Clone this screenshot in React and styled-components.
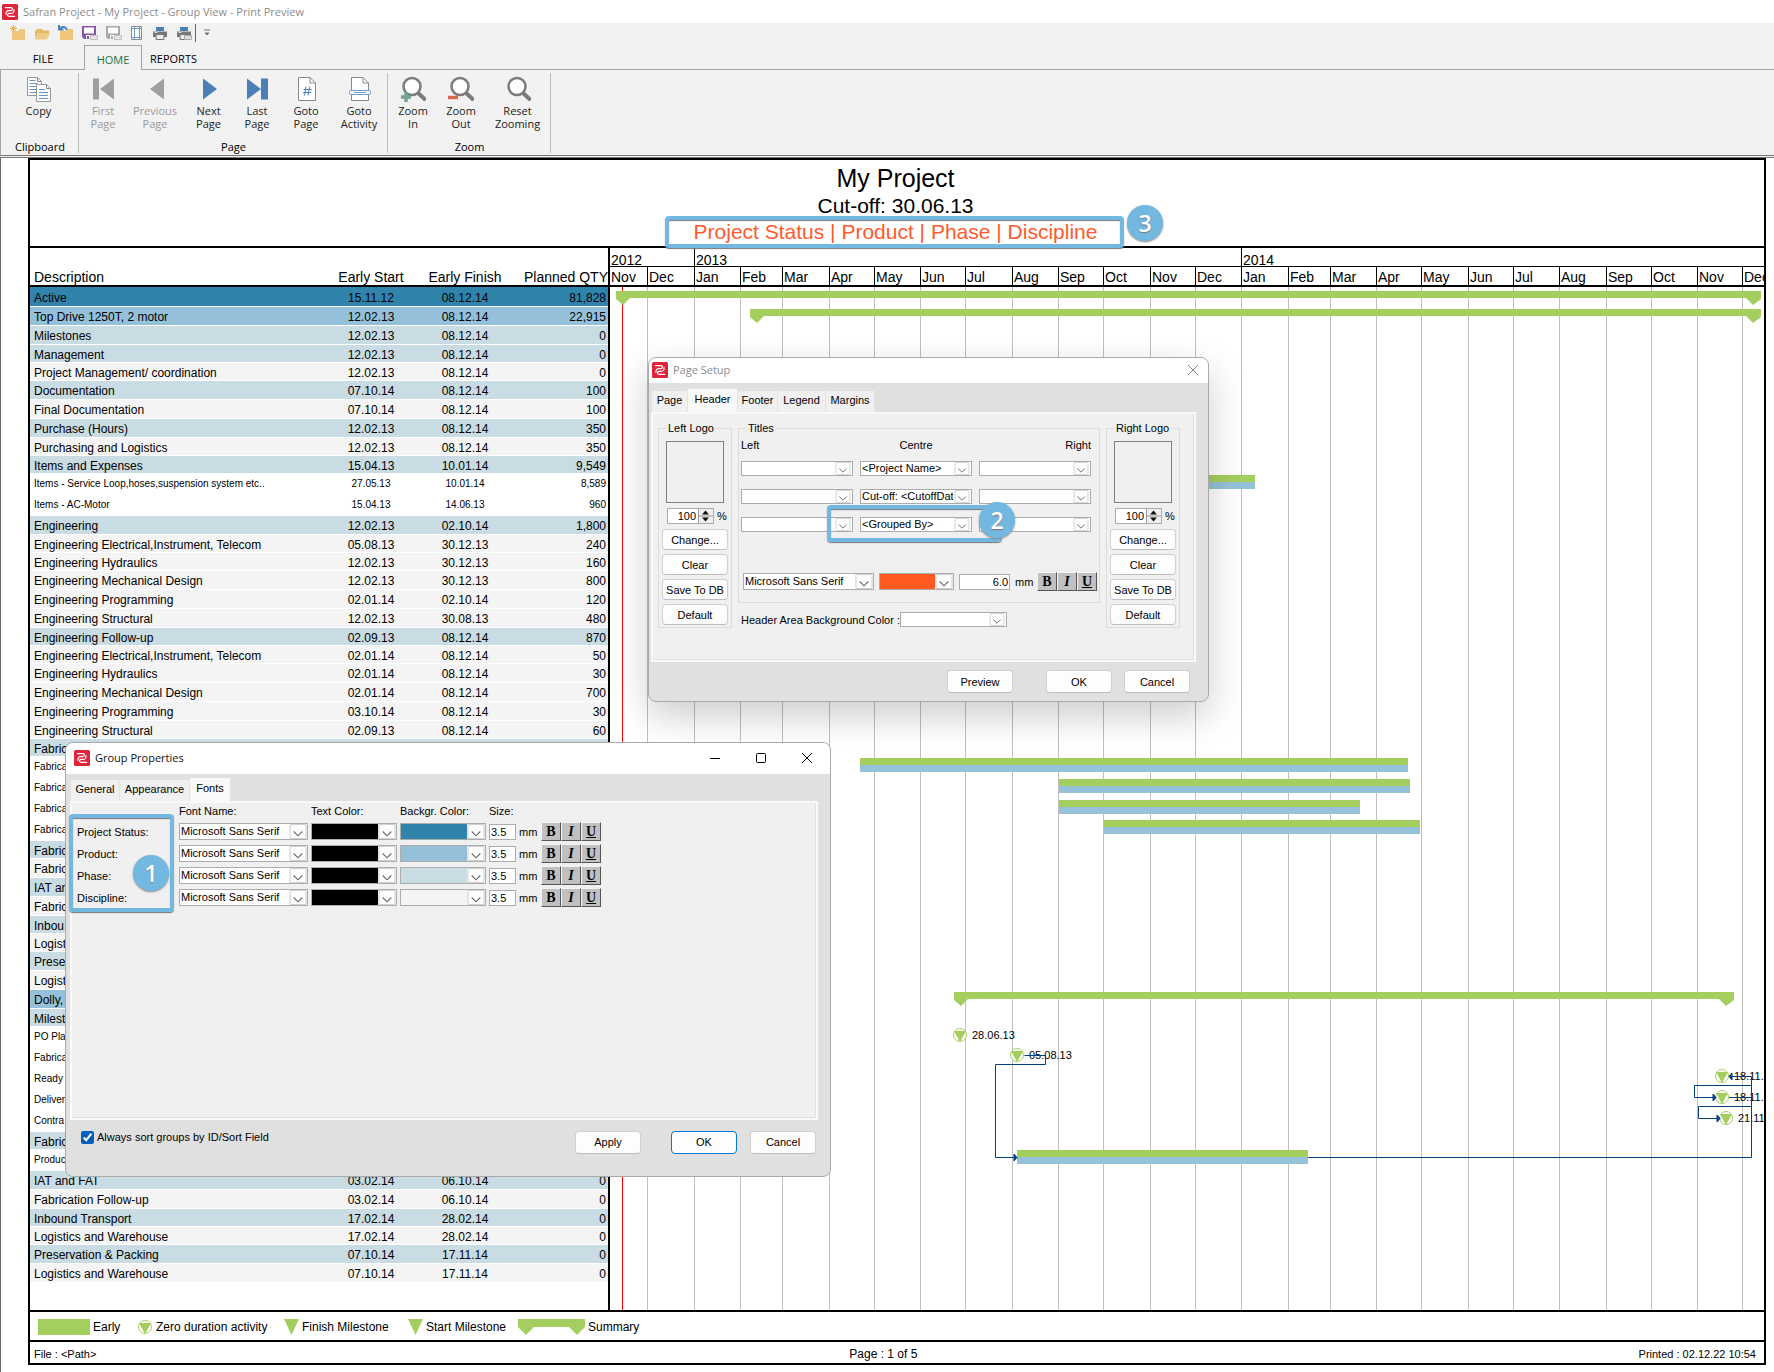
import { useState } from 'react';
import { styled, createGlobalStyle, css } from 'styled-components';

const GREEN = '#a4cf5e';
const BLUE = '#96c2d9';
const LINK = '#04417f';
const UI = "'Open Sans', 'Noto Sans', sans-serif";
const SANS = "'Liberation Sans', Arial, sans-serif";

const levels = {
  status: '#3083ab',
  product: '#94c1d9',
  phase: '#c9dbe3',
  discipline: '#f4f4f4',
  task: '#ffffff',
};

const rows = [
  ['status', 'Active', '15.11.12', '08.12.14', '81,828'],
  ['product', 'Top Drive 1250T, 2 motor', '12.02.13', '08.12.14', '22,915'],
  ['phase', 'Milestones', '12.02.13', '08.12.14', '0'],
  ['phase', 'Management', '12.02.13', '08.12.14', '0'],
  ['discipline', 'Project Management/ coordination', '12.02.13', '08.12.14', '0'],
  ['phase', 'Documentation', '07.10.14', '08.12.14', '100'],
  ['discipline', 'Final Documentation', '07.10.14', '08.12.14', '100'],
  ['phase', 'Purchase (Hours)', '12.02.13', '08.12.14', '350'],
  ['discipline', 'Purchasing and Logistics', '12.02.13', '08.12.14', '350'],
  ['phase', 'Items and Expenses', '15.04.13', '10.01.14', '9,549'],
  ['task', 'Items - Service Loop,hoses,suspension system etc..', '27.05.13', '10.01.14', '8,589'],
  ['task', 'Items - AC-Motor', '15.04.13', '14.06.13', '960'],
  ['phase', 'Engineering', '12.02.13', '02.10.14', '1,800'],
  ['discipline', 'Engineering Electrical,Instrument, Telecom', '05.08.13', '30.12.13', '240'],
  ['discipline', 'Engineering Hydraulics', '12.02.13', '30.12.13', '160'],
  ['discipline', 'Engineering Mechanical Design', '12.02.13', '30.12.13', '800'],
  ['discipline', 'Engineering Programming', '02.01.14', '02.10.14', '120'],
  ['discipline', 'Engineering Structural', '12.02.13', '30.08.13', '480'],
  ['phase', 'Engineering Follow-up', '02.09.13', '08.12.14', '870'],
  ['discipline', 'Engineering Electrical,Instrument, Telecom', '02.01.14', '08.12.14', '50'],
  ['discipline', 'Engineering Hydraulics', '02.01.14', '08.12.14', '30'],
  ['discipline', 'Engineering Mechanical Design', '02.01.14', '08.12.14', '700'],
  ['discipline', 'Engineering Programming', '03.10.14', '08.12.14', '30'],
  ['discipline', 'Engineering Structural', '02.09.13', '08.12.14', '60'],
  ['phase', 'Fabric'],
  ['task', 'Fabrica'],
  ['task', 'Fabrica'],
  ['task', 'Fabrica'],
  ['task', 'Fabrica'],
  ['phase', 'Fabric'],
  ['discipline', 'Fabric'],
  ['phase', 'IAT an'],
  ['discipline', 'Fabric'],
  ['phase', 'Inbou'],
  ['discipline', 'Logist'],
  ['phase', 'Prese'],
  ['discipline', 'Logist'],
  ['product', 'Dolly,'],
  ['phase', 'Milest'],
  ['task', 'PO Pla'],
  ['task', 'Fabrica'],
  ['task', 'Ready'],
  ['task', 'Deliver'],
  ['task', 'Contra'],
  ['phase', 'Fabric'],
  ['task', 'Produc'],
  ['phase', 'IAT and FAT', '03.02.14', '06.10.14', '0'],
  ['discipline', 'Fabrication Follow-up', '03.02.14', '06.10.14', '0'],
  ['phase', 'Inbound Transport', '17.02.14', '28.02.14', '0'],
  ['discipline', 'Logistics and Warehouse', '17.02.14', '28.02.14', '0'],
  ['phase', 'Preservation & Packing', '07.10.14', '17.11.14', '0'],
  ['discipline', 'Logistics and Warehouse', '07.10.14', '17.11.14', '0'],
];

// left edge of every month on the time scale
const monthNames = ['Jan', 'Feb', 'Mar', 'Apr', 'May', 'Jun', 'Jul', 'Aug', 'Sep', 'Oct', 'Nov', 'Dec'];
const dayWidth = 1.5;
const firstMonthWidth = 37;
const dec2012 = Date.UTC(2012, 11, 1);

const months = Array.from({ length: 26 }, (_, i) => {
  const date = Date.UTC(2012, 10 + i, 1);
  const left = i === 0 ? 0 : Math.round(firstMonthWidth + ((date - dec2012) / 86400000) * dayWidth);
  return { name: monthNames[(10 + i) % 12], left };
});

const widthOf = (from, to) => (months[to] ? months[to].left - months[from].left : undefined);

const years = [
  { name: '2012', width: widthOf(0, 2) },
  { name: '2013', width: widthOf(2, 14) },
  { name: '2014' },
];

const summaries = [
  { x1: 6, x2: 1151, y: 4 },
  { x1: 140, x2: 1151, y: 22 },
  { x1: 344, x2: 1124, y: 705 },
];

const bars = [
  { x1: 263, x2: 645, y: 188 },
  { x1: 250, x2: 798, y: 471 },
  { x1: 449, x2: 800, y: 492 },
  { x1: 449, x2: 750, y: 513 },
  { x1: 494, x2: 810, y: 533 },
  { x1: 407, x2: 698, y: 863 },
];

const milestones = [
  { x: 350, y: 748, label: '28.06.13', labelX: 362 },
  { x: 407, y: 768, label: '05.08.13', labelX: 419 },
  { x: 1112, y: 789, label: '18.11.14', labelX: 1124 },
  { x: 1112, y: 810, label: '18.11.14', labelX: 1124 },
  { x: 1116, y: 831, label: '21.11.14', labelX: 1128 },
];

const links = [
  'M414.5 768.5H435.5V777.5H385.5V870.5H406',
  'M698 870.5H1141.5V789.5H1120',
  'M1119 810.5H1141.5',
  'M1141.5 798.5H1084.5V810.5H1105',
  'M1141.5 819.5H1088.5V831.5H1110',
];

const fontRows = [
  ['Project Status:', '#3083ab'],
  ['Product:', '#94c1d9'],
  ['Phase:', '#c9dbe3'],
  ['Discipline:', '#f4f4f4'],
];

export default function App() {
  return (
    <>
      <GlobalStyle />
      <Window>
        <TitleBar>
          <Logo />
          Safran Project - My Project - Group View - Print Preview
        </TitleBar>
        <QuickAccess />
        <Ribbon />
        <Preview>
          <Sheet>
            <SheetHeader>
              <ProjectName>My Project</ProjectName>
              <HeaderLine>Cut-off: 30.06.13</HeaderLine>
              <HeaderLine $accent>Project Status | Product | Phase | Discipline</HeaderLine>
            </SheetHeader>
            <SheetBody>
              <Activities />
              <Gantt />
            </SheetBody>
            <Legend />
            <SheetFooter>
              <span>File : &lt;Path&gt;</span>
              <PageNumber>Page : 1 of 5</PageNumber>
              <Printed>Printed : 02.12.22 10:54</Printed>
            </SheetFooter>
          </Sheet>
        </Preview>
        <PageSetup />
        <GroupProperties />
        <Frame $x={665} $y={216} $w={459} $h={32} />
        <Badge $x={1127} $y={205}>3</Badge>
        <Frame $x={827} $y={505} $w={175} $h={37} />
        <Badge $x={979} $y={502}>2</Badge>
        <Frame $x={69} $y={814} $w={105} $h={98} />
        <Badge $x={133} $y={855}>1</Badge>
      </Window>
    </>
  );
}

function Logo() {
  return (
    <LogoSvg viewBox="0 0 16 16" width="16" height="16" aria-hidden="true">
      <rect width="16" height="16" rx="1.5" fill="#e0243a" />
      <g fill="none" stroke="#fff" strokeWidth="1.2" strokeLinecap="round">
        <path d="M3.4 3.6H8.8C11 3.6 11 6.6 8.8 6.6H7C4.4 6.6 3.8 8.4 4 10.4" />
        <path d="M12.6 12.4H7.2C5 12.4 5 9.4 7.2 9.4H9C11.6 9.4 12.2 7.6 12 5.6" />
      </g>
    </LogoSvg>
  );
}

function FolderIcon({ kind }) {
  return (
    <svg width="16" height="16" viewBox="0 0 16 16" aria-hidden="true">
      {kind === 'open' ? (
        <>
          <path d="M3 4h5l1 1.5h6V8H4L1 14V6z" fill="#e3b963" />
          <path d="M4.5 8H16l-3 6.5H1z" fill="#f0cb82" />
        </>
      ) : (
        <path d="M2 6h6l2-2h5v11H2z" fill="#eec67a" />
      )}
      {kind === 'new' && <path d="M3.5 0v7M0 3.5h7M1 1l5 5M6 1L1 6" stroke="#e9b44f" strokeWidth="1" />}
      {kind === 'back' && (
        <path d="M9 5C8 1.5 4 1 2 3.5M1 0v4.5h4.5" fill="none" stroke="#4a7fb5" strokeWidth="2" />
      )}
    </svg>
  );
}

function SaveIcon({ color }) {
  return (
    <svg width="16" height="16" viewBox="0 0 16 16" aria-hidden="true">
      <path d="M0 1h14v13H2l-2-2z" fill={color} />
      <path d="M2 2.5h10v6H2z" fill="#fff" />
      <path d="M4 10h7v4H4z" fill="#fff" />
      <path d="M5 11h2v3H5z" fill={color} />
      <path d="M8.5 10.5h7v4h-7z" fill="#e4e4e4" stroke="#c2c2c2" />
    </svg>
  );
}

function PrinterIcon({ card }) {
  return (
    <svg width="16" height="16" viewBox="0 0 16 16" aria-hidden="true">
      <path d="M4 2h8v4H4z" fill="#4a7fb5" />
      <path d="M1 6.5h14V12H1z" fill="#777" />
      <path d="M4 9.5h8v5H4z" fill="#e8eef4" stroke="#777" />
      <path d="M2.5 7.5h3" stroke="#ddd" />
      {card && <path d="M8.5 10.5h7v4h-7z" fill="#ddd" stroke="#aaa" />}
    </svg>
  );
}

function QuickAccess() {
  return (
    <QuickBar>
      <QuickButton aria-label="New"><FolderIcon kind="new" /></QuickButton>
      <QuickButton aria-label="Open"><FolderIcon kind="open" /></QuickButton>
      <QuickButton aria-label="Close"><FolderIcon kind="back" /></QuickButton>
      <QuickButton aria-label="Save"><SaveIcon color="#8a56ac" /></QuickButton>
      <QuickButton aria-label="Save as"><SaveIcon color="#a8a8a8" /></QuickButton>
      <QuickButton aria-label="Page layout">
        <svg width="14" height="16" viewBox="1 0 14 16" aria-hidden="true">
          <path d="M2.5 1.5h10v13h-10z" fill="#fff" stroke="#888" />
          <path d="M5.5 1.5v13M10.5 1.5v13M2.5 3.5h10M2.5 12.5h10" stroke="#6c9bd0" />
        </svg>
      </QuickButton>
      <QuickButton aria-label="Print"><PrinterIcon /></QuickButton>
      <QuickButton aria-label="Print setup"><PrinterIcon card /></QuickButton>
      <QuickDivider />
      <QuickButton aria-label="Customize toolbar">
        <svg width="6" height="8" viewBox="0 0 6 8" aria-hidden="true">
          <path d="M0 1h6M1 4h4L3 6z" fill="#777" stroke="#777" />
        </svg>
      </QuickButton>
    </QuickBar>
  );
}

const RibbonSvg = styled.svg`
  width: 26px;
  height: 26px;
  margin-bottom: 2px;
`;

const docPath = 'M5.5 1.5H17L22.5 7V24.5H5.5z';

function Magnifier({ children }) {
  return (
    <RibbonSvg viewBox="0 0 26 26">
      <path d="M17.5 16.5L24.5 23" stroke="#7b7b7b" strokeWidth="4" strokeLinecap="round" />
      <circle cx="12" cy="10.5" r="8.5" fill="#fff" stroke="#7b7b7b" strokeWidth="2.5" />
      {children}
    </RibbonSvg>
  );
}

const icons = {
  copy: (
    <RibbonSvg viewBox="0 0 26 26">
      <path d="M1.5 1.5h10l4 4V19.5h-14z" fill="#fff" stroke="#999" />
      <path d="M11.5 1.5v4h4" fill="none" stroke="#888" />
      <path d="M3.5 4.5h6M3.5 7.5h8M3.5 10.5h7M3.5 13.5h7M3.5 16.5h7" stroke="#6c94c4" />
      <path d="M10.5 8.5h10l4 4v13h-14z" fill="#fff" stroke="#999" />
      <path d="M20.5 8.5v4h4" fill="none" stroke="#888" />
      <path d="M13 13.5h6M13 16.5h9M13 19.5h9M13 22.5h9" stroke="#6c94c4" />
    </RibbonSvg>
  ),
  first: <RibbonSvg viewBox="0 0 26 26"><path d="M3 2.5h6v21H3zM24 2.5v21L10 13z" fill="#9f9f9f" /></RibbonSvg>,
  previous: <RibbonSvg viewBox="0 0 26 26"><path d="M22 2.5v21L8 13z" fill="#9f9f9f" /></RibbonSvg>,
  next: <RibbonSvg viewBox="0 0 26 26"><path d="M7 2.5v21L21 13z" fill="#4a7fb8" /></RibbonSvg>,
  last: <RibbonSvg viewBox="0 0 26 26"><path d="M3 2.5v21L17 13zM17 2.5h7v21h-7z" fill="#4a7fb8" /></RibbonSvg>,
  gotoPage: (
    <RibbonSvg viewBox="0 0 26 26">
      <path d={docPath} fill="#fff" stroke="#888" />
      <path d="M17 1.5V7h5.5" fill="none" stroke="#888" />
      <path d="M13 10.5l-1.5 9M16.5 10.5l-1.5 9M10.5 13.5h8M10 16.5h8" stroke="#4a7fb8" fill="none" />
    </RibbonSvg>
  ),
  gotoActivity: (
    <RibbonSvg viewBox="0 0 26 26">
      <path d={docPath} fill="#fff" stroke="#888" />
      <path d="M17 1.5V7h5.5" fill="none" stroke="#888" />
      <rect x="3.5" y="14.5" width="21" height="4" rx="1" fill="#fff" stroke="#6c9bd0" />
      <path d="M8 16.5h12" stroke="#6c9bd0" />
    </RibbonSvg>
  ),
  zoomIn: <Magnifier><path d="M6 16v10M1 21h10" stroke="#72a491" strokeWidth="3.5" /></Magnifier>,
  zoomOut: <Magnifier><path d="M0 21.5h10" stroke="#d9694e" strokeWidth="3.5" /></Magnifier>,
  reset: <Magnifier />,
};

const ribbonGroups = [
  { name: 'Clipboard', items: [['copy', 'Copy', '', 73]] },
  {
    name: 'Page',
    items: [
      ['first', 'First', 'Page', 46, true],
      ['previous', 'Previous', 'Page', 58, true],
      ['next', 'Next', 'Page', 49],
      ['last', 'Last', 'Page', 48],
      ['gotoPage', 'Goto', 'Page', 50],
      ['gotoActivity', 'Goto', 'Activity', 56],
    ],
  },
  {
    name: 'Zoom',
    items: [
      ['zoomIn', 'Zoom', 'In', 48],
      ['zoomOut', 'Zoom', 'Out', 48],
      ['reset', 'Reset', 'Zooming', 65],
    ],
  },
];

function Ribbon() {
  return (
    <>
      <RibbonTabs role="tablist">
        <RibbonTab role="tab" $width={82}>FILE</RibbonTab>
        <RibbonTab role="tab" $width={58} $active>HOME</RibbonTab>
        <RibbonTab role="tab" $width={63}>REPORTS</RibbonTab>
      </RibbonTabs>
      <RibbonBody>
        {ribbonGroups.map((group) => (
          <RibbonGroup key={group.name}>
            <RibbonButtons>
              {group.items.map(([icon, top, bottom, width, disabled]) => (
                <RibbonButton key={icon} $width={width} disabled={disabled}>
                  {icons[icon]}
                  <span>{top}</span>
                  <span>{bottom}</span>
                </RibbonButton>
              ))}
            </RibbonButtons>
            <RibbonLabel>{group.name}</RibbonLabel>
          </RibbonGroup>
        ))}
      </RibbonBody>
    </>
  );
}

function Activities() {
  return (
    <TablePane>
      <Table>
        <colgroup>
          <col />
          <Col $width={94} />
          <Col $width={94} />
          <Col $width={96} />
        </colgroup>
        <thead>
          <tr>
            <Th>Description</Th>
            <Th $align="center">Early Start</Th>
            <Th $align="center">Early Finish</Th>
            <Th $align="right">Planned QTY</Th>
          </tr>
        </thead>
        <tbody>
          {rows.map(([level, description, start, finish, qty], i) => (
            <Row key={i} $level={level}>
              <td>{description}</td>
              <DateCell>{start}</DateCell>
              <DateCell>{finish}</DateCell>
              <QtyCell>{qty}</QtyCell>
            </Row>
          ))}
        </tbody>
      </Table>
    </TablePane>
  );
}

function Milestone({ x, y }) {
  return (
    <g>
      <circle cx={x} cy={y} r="6.5" fill="#fff" stroke={GREEN} />
      <path d={`M${x - 6} ${y - 4}H${x + 6}L${x} ${y + 7}z`} fill={GREEN} />
    </g>
  );
}

function Gantt() {
  return (
    <ChartPane>
      <Years>
        {years.map((year) => (
          <Year key={year.name} $width={year.width}>{year.name}</Year>
        ))}
      </Years>
      <Months>
        {months.map((month, i) => (
          <Month key={month.left} $width={widthOf(i, i + 1)}>{month.name}</Month>
        ))}
      </Months>
      <Chart>
        {months.slice(1).map(({ left }) => (
          <path key={left} d={`M${left + 0.5} 0V1024`} stroke="#bfbfbf" />
        ))}
        <path d="M12.5 0V1024" stroke="#f00" />
        {summaries.map(({ x1, x2, y }) => (
          <path
            key={y}
            fill={GREEN}
            d={`M${x1} ${y}H${x2}V${y + 8}L${x2 - 8} ${y + 14}L${x2 - 15} ${y + 7}H${x1 + 14}L${x1 + 7} ${y + 14}L${x1} ${y + 8}z`}
          />
        ))}
        {bars.map(({ x1, x2, y }) => (
          <g key={y}>
            <rect x={x1} y={y} width={x2 - x1} height="7" fill={GREEN} />
            <rect x={x1} y={y + 7} width={x2 - x1} height="7" fill={BLUE} />
          </g>
        ))}
        {milestones.map((m) => (
          <g key={m.y}>
            <Milestone x={m.x} y={m.y} />
            <MilestoneDate x={m.labelX} y={m.y + 4}>{m.label}</MilestoneDate>
          </g>
        ))}
        {links.map((d) => (
          <path key={d} d={d} fill="none" stroke={LINK} />
        ))}
        <path
          d="M404 867v7l3-3.5zM1122 786v7l-3-3.5zM1103 807v7l3-3.5zM1107 828v7l3-3.5z"
          fill={LINK}
          stroke={LINK}
        />
      </Chart>
    </ChartPane>
  );
}

function Legend() {
  return (
    <LegendBar>
      <LegendItem $width={100}>
        <svg width="52" height="16"><rect width="52" height="16" fill={GREEN} /></svg>
        Early
      </LegendItem>
      <LegendItem $width={146}>
        <svg width="15" height="16"><Milestone x={7} y={8} /></svg>
        Zero duration activity
      </LegendItem>
      <LegendItem $width={124}>
        <svg width="15" height="16"><path d="M0 0h15L7.5 16z" fill={GREEN} /></svg>
        Finish Milestone
      </LegendItem>
      <LegendItem $width={110}>
        <svg width="15" height="16"><path d="M0 0h15L7.5 16z" fill={GREEN} /></svg>
        Start Milestone
      </LegendItem>
      <LegendItem $width={140}>
        <svg width="67" height="16">
          <path d="M0 0H67V8L59 16L51 8H16L8 16L0 8z" fill={GREEN} />
        </svg>
        Summary
      </LegendItem>
    </LegendBar>
  );
}

function ComboBox({ label, value = '', width, color, tall }) {
  return (
    <Combo $width={width} $tall={tall}>
      <ComboSelect aria-label={label} $color={color}>
        <option>{value}</option>
      </ComboSelect>
      <ComboArrow viewBox="0 0 16 14" aria-hidden="true">
        <rect x="0.5" y="0.5" width="15" height="13" rx="1" fill="#fdfdfd" stroke="#cfcfcf" />
        <path d="M4 7l4 4 4-4" fill="none" stroke="#666" />
      </ComboArrow>
    </Combo>
  );
}

function FontStyles() {
  return (
    <StyleButtons>
      <StyleButton aria-label="Bold">B</StyleButton>
      <StyleButton aria-label="Italic" $italic>I</StyleButton>
      <StyleButton aria-label="Underline" $underline>U</StyleButton>
    </StyleButtons>
  );
}

function LogoSettings({ title }) {
  return (
    <Group $width={74}>
      <GroupLegend>{title}</GroupLegend>
      <LogoStack>
        <LogoBox />
        <Percent>
          <Spinner>
            <NumberInput aria-label={`${title} scale`} defaultValue="100" />
            <svg width="15" height="14" viewBox="0 0 15 14" aria-hidden="true">
              <rect width="15" height="14" fill="#f0f0f0" />
              <path d="M7.5 1.5l3.5 4H4zM7.5 12.5l3.5-4H4z" fill="#111" />
              <path d="M0 7h15M0.5 0v14" stroke="#999" />
            </svg>
          </Spinner>
          %
        </Percent>
        <SmallButton>Change...</SmallButton>
        <SmallButton>Clear</SmallButton>
        <SmallButton>Save To DB</SmallButton>
        <SmallButton>Default</SmallButton>
      </LogoStack>
    </Group>
  );
}

function CloseIcon({ color }) {
  return (
    <svg width="12" height="12" viewBox="0 0 12 12" aria-hidden="true">
      <path d="M1 1l10 10M11 1L1 11" stroke={color} fill="none" />
    </svg>
  );
}

function PageSetup() {
  return (
    <PageSetupDialog role="dialog" aria-label="Page Setup">
      <DialogTitle $height={25}>
        <Logo />
        <DialogName>Page Setup</DialogName>
        <WindowButton aria-label="Close"><CloseIcon color="#8a8a8a" /></WindowButton>
      </DialogTitle>
      <PageSetupBody>
        <Tabs role="tablist">
          <Tab role="tab" $width={36}>Page</Tab>
          <Tab role="tab" $width={50} $active>Header</Tab>
          <Tab role="tab" $width={40}>Footer</Tab>
          <Tab role="tab" $width={48}>Legend</Tab>
          <Tab role="tab" $width={49}>Margins</Tab>
        </Tabs>
        <SetupPanel>
          <LogoSettings title="Left Logo" />
          <div>
            <Group $width={358}>
              <GroupLegend>Titles</GroupLegend>
              <TitleGrid>
                <span>Left</span>
                <TitleHead $align="center">Centre</TitleHead>
                <TitleHead $align="right">Right</TitleHead>
                {['<Project Name>', 'Cut-off: <CutoffDate>', '<Grouped By>'].map((value, i) => [
                  <ComboBox key={`l${i}`} label={`Left title ${i + 1}`} />,
                  <ComboBox key={`c${i}`} label={`Centre title ${i + 1}`} value={value} />,
                  <ComboBox key={`r${i}`} label={`Right title ${i + 1}`} />,
                ])}
              </TitleGrid>
              <TitleFont>
                <ComboBox label="Font" value="Microsoft Sans Serif" width={131} tall />
                <ComboBox label="Text color" width={75} color="#ff5a1f" tall />
                <SizeInput aria-label="Text size" $width={51} $right defaultValue="6.0" />
                <TitleUnit>mm</TitleUnit>
                <FontStyles />
              </TitleFont>
            </Group>
            <BackgroundRow>
              Header Area Background Color :
              <ComboBox label="Header Area Background Color" width={107} />
            </BackgroundRow>
          </div>
          <LogoSettings title="Right Logo" />
        </SetupPanel>
        <SetupActions>
          <DialogButton>Preview</DialogButton>
          <SetupConfirm>
            <DialogButton>OK</DialogButton>
            <DialogButton>Cancel</DialogButton>
          </SetupConfirm>
        </SetupActions>
      </PageSetupBody>
    </PageSetupDialog>
  );
}

function GroupProperties() {
  const [sorted, setSorted] = useState(true);

  return (
    <GroupDialog role="dialog" aria-label="Group Properties">
      <DialogTitle $height={31} $active>
        <Logo />
        <DialogName>Group Properties</DialogName>
        <WindowButtons>
          <WindowButton aria-label="Minimize">
            <svg width="12" height="12" aria-hidden="true"><path d="M1 6.5h10" stroke="#000" /></svg>
          </WindowButton>
          <WindowButton aria-label="Maximize">
            <svg width="12" height="12" aria-hidden="true">
              <rect x="1.5" y="1.5" width="9" height="9" rx="1" fill="none" stroke="#000" />
            </svg>
          </WindowButton>
          <WindowButton aria-label="Close"><CloseIcon color="#000" /></WindowButton>
        </WindowButtons>
      </DialogTitle>
      <GroupBody>
        <Tabs role="tablist">
          <Tab role="tab" $width={49}>General</Tab>
          <Tab role="tab" $width={70}>Appearance</Tab>
          <Tab role="tab" $width={41} $active>Fonts</Tab>
        </Tabs>
        <FontsPanel>
          <FontGrid>
            <span />
            <span>Font Name:</span>
            <span>Text Color:</span>
            <span>Backgr. Color:</span>
            <span>Size:</span>
            <span />
            <span />
            {fontRows.map(([name, color]) => [
              <span key="name">{name}</span>,
              <ComboBox key="font" label={`${name} font`} value="Microsoft Sans Serif" tall />,
              <ComboBox key="text" label={`${name} text color`} color="#000" tall />,
              <ComboBox key="back" label={`${name} background color`} color={color} tall />,
              <SizeInput key="size" aria-label={`${name} size`} $width={27} defaultValue="3.5" />,
              <span key="mm">mm</span>,
              <FontStyles key="styles" />,
            ])}
          </FontGrid>
        </FontsPanel>
        <GroupActions>
          <SortLabel>
            <SortCheck type="checkbox" checked={sorted} onChange={(e) => setSorted(e.target.checked)} />
            Always sort groups by ID/Sort Field
          </SortLabel>
          <DialogButton>Apply</DialogButton>
          <GroupConfirm>
            <DialogButton $primary>OK</DialogButton>
            <DialogButton>Cancel</DialogButton>
          </GroupConfirm>
        </GroupActions>
      </GroupBody>
    </GroupDialog>
  );
}

const GlobalStyle = createGlobalStyle`
  * {
    box-sizing: border-box;
  }
  body {
    margin: 0;
    background: #fff;
    color: #000;
    font-family: ${SANS};
  }
  button, input, select {
    margin: 0;
    padding: 0;
    border: 0;
    border-radius: 0;
    background: none;
    color: inherit;
    font: inherit;
  }
  svg {
    flex: none;
  }
`;

const Window = styled.div`
  position: relative;
  overflow: hidden;
`;

const LogoSvg = styled.svg`
  display: block;
`;

const TitleBar = styled.header`
  display: flex;
  align-items: center;
  gap: 5px;
  height: 23px;
  padding-left: 2px;
  color: #8c8c8c;
  font-family: ${UI};
  font-size: 11px;
`;

const QuickBar = styled.div`
  display: flex;
  align-items: flex-start;
  gap: 8px;
  height: 22px;
  padding: 1px 0 0 10px;
  background: #f2f2f2;
`;

const QuickButton = styled.button`
  display: flex;
  align-items: center;
  height: 17px;
`;

const QuickDivider = styled.div`
  width: 1px;
  height: 18px;
  margin-left: -5px;
  background: #666;
`;

const RibbonTabs = styled.div`
  display: flex;
  height: 24px;
  padding-left: 2px;
  background: #f2f2f2;
  font-family: ${UI};
  font-size: 11px;
`;

const RibbonTab = styled.button`
  width: ${(p) => p.$width}px;
  height: ${(p) => (p.$active ? 25 : 24)}px;
  padding-top: 2px;
  z-index: 1;
  ${(p) =>
    p.$active &&
    css`
      border: 1px solid #a3a3a3;
      border-bottom: 0;
      background: #f2f2f2;
      color: #217346;
    `}
`;

const RibbonBody = styled.div`
  display: flex;
  height: 89px;
  border: 1px solid #a3a3a3;
  border-right: 0;
  border-bottom: 3px double #777;
  background: #f2f2f2;
  font-family: ${UI};
  font-size: 11px;
  line-height: 13px;
`;

const RibbonGroup = styled.div`
  display: flex;
  flex-direction: column;
  justify-content: space-between;
  min-width: 78px;
  margin: 3px 0 2px;
  padding: 3px 0 0 1px;
  border-right: 1px solid #bdbdbd;
`;

const RibbonButtons = styled.div`
  display: flex;
`;

const RibbonButton = styled.button`
  display: flex;
  flex-direction: column;
  align-items: center;
  width: ${(p) => p.$width}px;
  color: ${(p) => (p.disabled ? '#9a9a9a' : '#222')};
`;

const RibbonLabel = styled.div`
  text-align: center;
`;

const Preview = styled.main`
  padding: 0 8px 7px 27px;
  border-left: 1px solid #666;
`;

const Sheet = styled.section`
  border: 2px solid #000;
`;

const SheetHeader = styled.div`
  padding: 3px 3px 1px 0;
  border-bottom: 2px solid #000;
  text-align: center;
`;

const ProjectName = styled.div`
  font-size: 25px;
  line-height: 30px;
`;

const HeaderLine = styled.div`
  font-size: 21px;
  line-height: 26px;
  color: ${(p) => (p.$accent ? '#ff5a2b' : '#000')};
`;

const SheetBody = styled.div`
  display: grid;
  grid-template-columns: 580px minmax(0, 1fr);
  border-bottom: 2px solid #000;
`;

const TablePane = styled.div`
  border-right: 2px solid #000;
`;

const Table = styled.table`
  width: 100%;
  border-spacing: 0;
  table-layout: fixed;
  font-size: 12px;
`;

const Col = styled.col`
  width: ${(p) => p.$width}px;
`;

const Th = styled.th`
  height: 39px;
  padding: 0 0 0 4px;
  border-bottom: 2px solid #000;
  font-size: 14px;
  font-weight: normal;
  line-height: 16px;
  text-align: ${(p) => p.$align || 'left'};
  vertical-align: bottom;
  white-space: nowrap;
  ${(p) => p.$align && 'padding-left: 0;'}
`;

const Row = styled.tr`
  td {
    height: 19px;
    padding: 3px 0 0 4px;
    border-bottom: 1px solid #fff;
    background: ${(p) => levels[p.$level]};
    line-height: 15px;
    vertical-align: top;
    white-space: nowrap;
  }
  &:nth-child(5n + 4) td,
  &:nth-child(5n) td {
    height: 18px;
    line-height: 14px;
  }
  &:first-child td {
    height: 20px;
    padding-top: 4px;
  }
  ${(p) =>
    p.$level === 'task' &&
    css`
      && td {
        height: 21px;
        padding-top: 1px;
        font-size: 10px;
        line-height: 17px;
      }
    `}
`;

const DateCell = styled.td`
  && {
    padding-left: 0;
    text-align: center;
  }
`;

const QtyCell = styled.td`
  && {
    padding-right: 2px;
    text-align: right;
  }
`;

const ChartPane = styled.div`
  display: flex;
  flex-direction: column;
  overflow: hidden;
`;

const Years = styled.div`
  display: flex;
  height: 19px;
  border-bottom: 1px solid #000;
  font-size: 14px;
  line-height: 24px;
`;

const Year = styled.div`
  flex: ${(p) => (p.$width ? 'none' : '1')};
  width: ${(p) => p.$width}px;
  padding-left: 1px;
  & + & {
    border-left: 1px solid #000;
  }
`;

const Months = styled.div`
  display: flex;
  height: 20px;
  border-bottom: 2px solid #000;
  font-size: 14px;
  line-height: 21px;
`;

const Month = styled.div`
  flex: ${(p) => (p.$width ? 'none' : '1 1 0')};
  width: ${(p) => p.$width}px;
  min-width: 0;
  padding-left: 1px;
  overflow: hidden;
  & + & {
    border-left: 1px solid #000;
  }
`;

const Chart = styled.svg`
  display: block;
  width: 100%;
  height: 1023px;
`;

const MilestoneDate = styled.text`
  font-size: 11px;
`;

const LegendBar = styled.div`
  display: flex;
  align-items: center;
  height: 30px;
  padding: 2px 0 0 8px;
  border-bottom: 2px solid #000;
  font-size: 12px;
`;

const LegendItem = styled.div`
  display: flex;
  align-items: center;
  gap: 3px;
  width: ${(p) => p.$width}px;
  white-space: nowrap;
`;

const SheetFooter = styled.footer`
  display: grid;
  grid-template-columns: 35fr auto 36fr;
  align-items: center;
  height: 21px;
  padding: 2px 8px 0 4px;
  font-size: 11px;
`;

const PageNumber = styled.span`
  font-size: 12px;
`;

const Printed = styled.span`
  text-align: right;
`;

const Frame = styled.div`
  position: absolute;
  left: ${(p) => p.$x}px;
  top: ${(p) => p.$y}px;
  width: ${(p) => p.$w}px;
  height: ${(p) => p.$h}px;
  border: 4px solid #73b8e1;
  border-radius: 4px;
  box-shadow: 0 1px 1px #777, inset 0 1px 1px #777;
  pointer-events: none;
`;

const Badge = styled.div`
  position: absolute;
  left: ${(p) => p.$x}px;
  top: ${(p) => p.$y}px;
  display: grid;
  place-items: center;
  width: 36px;
  height: 36px;
  border-radius: 50%;
  background: #73b8e1;
  box-shadow: 0 1px 2px #888;
  color: #fff;
  font-family: ${UI};
  font-size: 23px;
  font-weight: 600;
  line-height: 36px;
  text-shadow: 0 1px 1px #777;
`;

const dialog = css`
  position: absolute;
  overflow: hidden;
  border: 1px solid #a9a9a9;
  border-radius: 8px;
  background: #e0e0e0;
  font-size: 11px;
  line-height: 14px;
`;

const PageSetupDialog = styled.section`
  ${dialog}
  top: 357px;
  left: 648px;
  width: 561px;
  box-shadow: 0 14px 36px rgba(0, 0, 0, 0.2);
`;

const GroupDialog = styled.section`
  ${dialog}
  top: 742px;
  left: 65px;
  width: 766px;
`;

const DialogTitle = styled.div`
  display: flex;
  align-items: center;
  gap: 5px;
  height: ${(p) => p.$height}px;
  padding: 0 ${(p) => (p.$active ? 17 : 9)}px 2px ${(p) => (p.$active ? 8 : 3)}px;
  background: #fff;
  color: ${(p) => (p.$active ? '#111' : '#8c8c8c')};
  font-family: ${UI};
`;

const DialogName = styled.span`
  flex: 1;
`;

const WindowButtons = styled.div`
  display: flex;
  gap: 34px;
`;

const WindowButton = styled.button`
  display: flex;
`;

const PageSetupBody = styled.div`
  padding: 6px 12px 8px 2px;
`;

const GroupBody = styled.div`
  padding: 4px 12px 22px 4px;
`;

const Tabs = styled.div`
  display: flex;
  align-items: flex-end;
  padding-left: 1px;
`;

const Tab = styled.button`
  width: ${(p) => p.$width}px;
  height: ${(p) => (p.$active ? 23 : 21)}px;
  padding-bottom: 3px;
  border-right: 1px solid #e3e3e3;
  background: ${(p) => (p.$active ? '#f9f9f9' : '#f0f0f0')};
`;

const Panel = styled.div`
  border: 2px solid #f9f9f9;
  background: #f0f0f0;
  box-shadow: inset -1px -1px #e0e0e0;
`;

const SetupPanel = styled(Panel)`
  display: flex;
  align-items: flex-start;
  gap: 6px;
  height: 250px;
  padding: 7px 5px;
`;

const FontsPanel = styled(Panel)`
  height: 319px;
  padding: 0 5px;
`;

const Group = styled.fieldset`
  width: ${(p) => p.$width}px;
  margin: 0;
  padding: 0 2px 2px;
  border: 1px solid #dcdcdc;
`;

const GroupLegend = styled.legend`
  margin-left: 5px;
  padding: 0 2px;
  white-space: nowrap;
`;

const LogoStack = styled.div`
  display: grid;
  justify-items: center;
  gap: 4px;
  padding-top: 6px;
`;

const LogoBox = styled.div`
  width: 58px;
  height: 62px;
  border: 1px solid #808080;
`;

const Percent = styled.div`
  display: flex;
  align-items: center;
  gap: 3px;
  margin: 1px 0;
  padding-left: 4px;
`;

const Spinner = styled.div`
  display: flex;
  width: 47px;
  height: 16px;
  border: 1px solid #acacac;
  background: #fff;
`;

const NumberInput = styled.input`
  flex: 1;
  min-width: 0;
  padding-right: 2px;
  text-align: right;
`;

const button = css`
  border: 1px solid #d0d0d0;
  border-bottom-color: #bdbdbd;
  border-radius: 4px;
  background: #fdfdfd;
  white-space: nowrap;
`;

const SmallButton = styled.button`
  ${button}
  width: 66px;
  height: 21px;
`;

const DialogButton = styled.button`
  ${button}
  width: 66px;
  height: 23px;
  ${(p) => p.$primary && 'border-color: #0078d4;'}
`;

const TitleGrid = styled.div`
  display: grid;
  grid-template-columns: repeat(3, 112px);
  grid-template-rows: 13px;
  gap: 13px 7px;
  margin-bottom: 40px;
  line-height: 20px;
`;

const TitleHead = styled.span`
  text-align: ${(p) => p.$align};
`;

const TitleFont = styled.div`
  display: flex;
  align-items: center;
  gap: 5px;
  padding: 0 0 9px 2px;
`;

const TitleUnit = styled.span`
  width: 17px;
`;

const BackgroundRow = styled.div`
  display: flex;
  align-items: center;
  margin-top: 9px;
  padding-left: 3px;
`;

const Combo = styled.div`
  display: flex;
  width: ${(p) => (p.$width ? `${p.$width}px` : 'auto')};
  height: ${(p) => (p.$tall ? 17 : 15)}px;
  border: 1px solid #acacac;
  background: #fff;
`;

const ComboSelect = styled.select`
  flex: 1;
  min-width: 0;
  padding-left: 1px;
  overflow: hidden;
  appearance: none;
  background: ${(p) => p.$color || '#fff'};
  line-height: 13px;
`;

const ComboArrow = styled.svg`
  width: 18px;
  height: 100%;
  background: #fff;
`;

const SizeInput = styled.input`
  width: ${(p) => p.$width}px;
  height: 16px;
  padding: 0 1px;
  border: 1px solid #acacac;
  background: #fff;
  text-align: ${(p) => (p.$right ? 'right' : 'left')};
`;

const StyleButtons = styled.div`
  display: flex;
`;

const StyleButton = styled.button`
  width: 20px;
  height: 19px;
  border: 1px solid;
  border-color: #f4f4f4 #555 #555 #f4f4f4;
  background: #c0c0c0;
  font-family: 'Liberation Serif', serif;
  font-size: 14px;
  font-weight: bold;
  font-style: ${(p) => (p.$italic ? 'italic' : 'normal')};
  line-height: 16px;
  text-decoration: ${(p) => (p.$underline ? 'underline' : 'none')};
`;

const SetupActions = styled.div`
  display: flex;
  justify-content: flex-end;
  gap: 33px;
  padding: 8px 6px 0 0;
`;

const SetupConfirm = styled.div`
  display: flex;
  gap: 12px;
`;

const FontGrid = styled.div`
  display: grid;
  grid-template-columns: 99px 129px 86px 86px 27px 19px 60px;
  grid-template-rows: 16px;
  grid-auto-rows: 19px;
  align-items: center;
  gap: 3px;
`;

const GroupActions = styled.div`
  display: flex;
  align-items: center;
  padding: 10px 2px 0 11px;
`;

const SortLabel = styled.label`
  display: flex;
  flex: 1;
  align-items: center;
  gap: 3px;
  padding-bottom: 10px;
`;

const SortCheck = styled.input`
  width: 13px;
  height: 13px;
  accent-color: #005fb8;
`;

const GroupConfirm = styled.div`
  display: flex;
  gap: 13px;
  margin-left: 30px;
`;
